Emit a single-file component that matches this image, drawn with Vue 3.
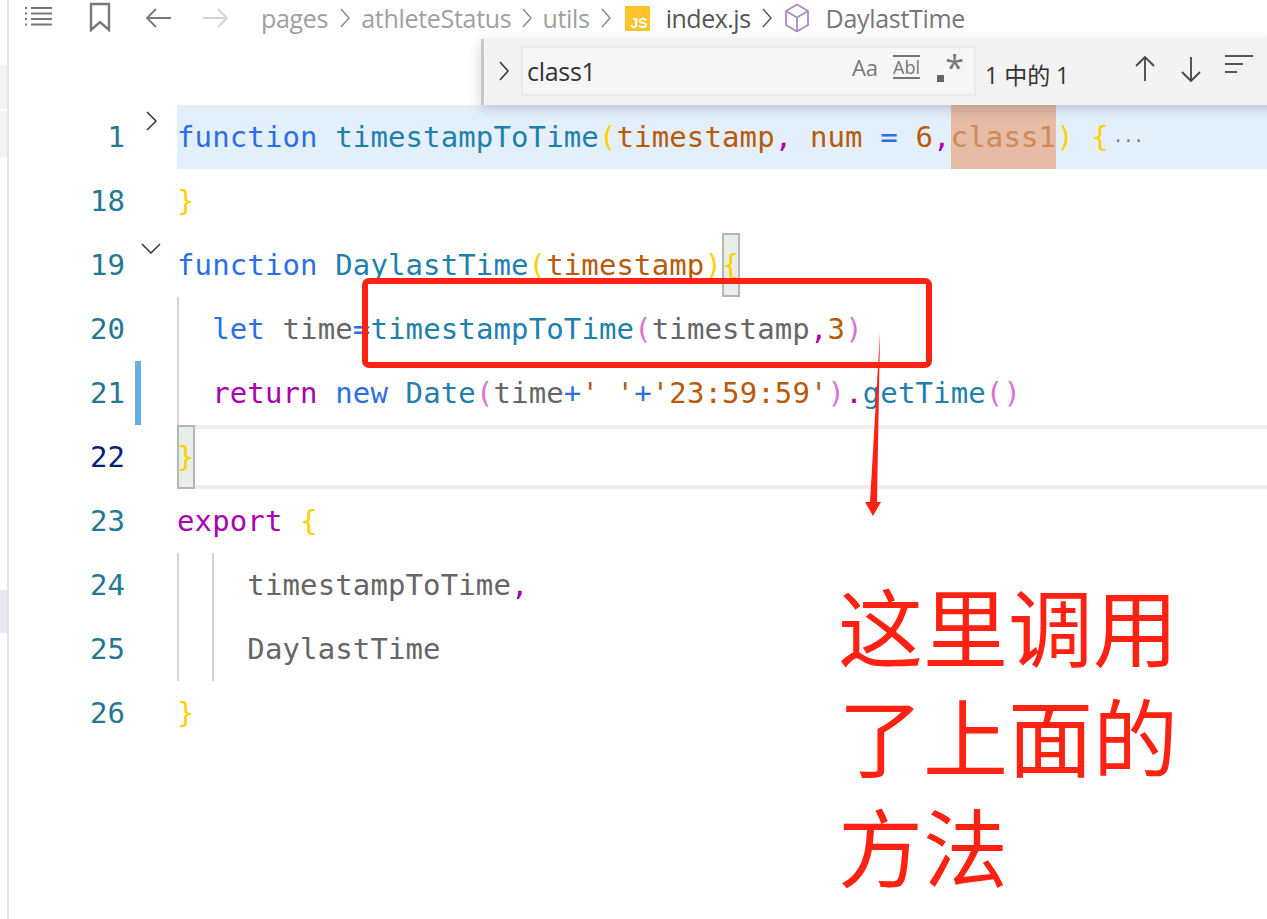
<script setup>
const lines = [
  { n: 1, fold: 'right', hl: true, toks: [['function ', 'blue'], ['timestampToTime', 'teal'], ['(', 'yel'], ['timestamp', 'org'], [',', 'pur'], [' ', 'gray'], ['num', 'org'], [' ', 'gray'], ['=', 'blue'], [' ', 'gray'], ['6', 'org'], [',', 'pur'], ['class1', 'match'], [')', 'yel'], [' ', 'gray'], ['{', 'yel']], dots: true },
  { n: 18, toks: [['}', 'yel']] },
  { n: 19, fold: 'down', toks: [['function ', 'blue'], ['DaylastTime', 'teal'], ['(', 'yel'], ['timestamp', 'org'], [')', 'yel'], ['{', 'yel box']] },
  { n: 20, guides: 1, indent: 2, toks: [['let ', 'blue'], ['time', 'gray'], ['=', 'blue'], ['timestampToTime', 'teal'], ['(', 'pink'], ['timestamp', 'gray'], [',', 'pur'], ['3', 'org'], [')', 'pink']] },
  { n: 21, guides: 1, indent: 2, mod: true, toks: [['return ', 'pur'], ['new ', 'blue'], ['Date', 'teal'], ['(', 'pink'], ['time', 'gray'], ['+', 'blue'], ["' '", 'org'], ['+', 'blue'], ["'23:59:59'", 'org'], [')', 'pink'], ['.', 'pur'], ['getTime', 'teal'], ['()', 'pink']] },
  { n: 22, current: true, toks: [['}', 'yel box']] },
  { n: 23, toks: [['export ', 'pur'], ['{', 'yel']] },
  { n: 24, guides: 2, indent: 4, toks: [['timestampToTime', 'gray'], [',', 'pur']] },
  { n: 25, guides: 2, indent: 4, toks: [['DaylastTime', 'gray']] },
  { n: 26, toks: [['}', 'yel']] }
]
</script>

<template>
  <div class="page">
    <aside class="strip">
      <div class="tab t1"></div>
      <div class="tab t2"></div>
      <div class="tab t3"></div>
    </aside>
    <main class="editor">
      <nav class="crumbs">
        <svg class="ic list" width="30" height="24" viewBox="0 0 30 24" fill="none" stroke="#777" stroke-width="2">
          <path d="M1 2h2M7 2h21M1 7.5h2M7 7.5h21M1 13h2M7 13h21M1 18.500h2M7 18.500h21" />
        </svg>
        <svg class="ic mark" width="22" height="30" viewBox="0 0 22 30" fill="none" stroke="#777" stroke-width="2.400">
          <path d="M2 2h18v26l-9-8-9 8z" />
        </svg>
        <svg class="ic back" width="28" height="22" viewBox="0 0 28 22" fill="none" stroke="#777" stroke-width="1.800">
          <path d="M26 11H2M11 2l-9 9 9 9" />
        </svg>
        <svg class="ic fwd" width="28" height="22" viewBox="0 0 28 22" fill="none" stroke="#d4d4d4" stroke-width="1.800">
          <path d="M2 11h24M17 2l9 9-9 9" />
        </svg>
        <span class="c-dim first">pages</span>
        <svg class="sep" width="12" height="22" viewBox="0 0 12 22" fill="none" stroke="#888" stroke-width="1.400"><path d="M2 2l8 9-8 9" /></svg>
        <span class="c-dim">athleteStatus</span>
        <svg class="sep tight" width="12" height="22" viewBox="0 0 12 22" fill="none" stroke="#888" stroke-width="1.400"><path d="M2 2l8 9-8 9" /></svg>
        <span class="c-dim">utils</span>
        <svg class="sep" width="12" height="22" viewBox="0 0 12 22" fill="none" stroke="#888" stroke-width="1.400"><path d="M2 2l8 9-8 9" /></svg>
        <span class="js"><span>JS</span></span>
        <span class="c-dark">index.js</span>
        <svg class="sep" width="12" height="22" viewBox="0 0 12 22" fill="none" stroke="#555" stroke-width="1.400"><path d="M2 2l8 9-8 9" /></svg>
        <svg class="cube" width="26" height="30" viewBox="0 0 26 30" fill="none" stroke="#a98ac6" stroke-width="1.800">
          <path d="M13 1.500l11 6.500v14l-11 6.500L2 22V8zM2 8l11 6.500L24 8M13 14.500v14" />
        </svg>
        <span class="c-sym">DaylastTime</span>
      </nav>

      <section class="code">
        <div v-for="l in lines" :key="l.n" class="line" :class="{ current: l.current }">
          <div class="num" :class="{ cur: l.current }">{{ l.n }}</div>
          <div class="gutter">
            <span v-if="l.mod" class="mod"></span>
            <svg v-if="l.fold === 'right'" class="fold-r" width="14" height="22" viewBox="0 0 14 22" fill="none" stroke="#333" stroke-width="1.500"><path d="M2 2l9 9-9 9" /></svg>
            <svg v-if="l.fold === 'down'" class="fold-d" width="22" height="14" viewBox="0 0 22 14" fill="none" stroke="#333" stroke-width="1.500"><path d="M2 2l9 9 9-9" /></svg>
          </div>
          <div class="text" :class="{ hl: l.hl }">
            <span v-for="g in (l.guides || 0)" :key="g" class="guide" :style="{ left: (g - 1) * 35 + 'px' }"></span>
            <span class="pad" v-if="l.indent">{{ ' '.repeat(l.indent) }}</span>
            <span v-for="(t, i) in l.toks" :key="i" :class="t[1]">{{ t[0] }}</span>
            <span v-if="l.dots" class="dots">···</span>
          </div>
        </div>
      </section>

      <div class="find">
        <svg class="find-chev" width="12" height="22" viewBox="0 0 12 22" fill="none" stroke="#333" stroke-width="1.500"><path d="M2 2l8 9-8 9" /></svg>
        <div class="find-input">
          <span class="find-q">class1</span>
          <span class="opt aa">Aa</span>
          <span class="opt ab">Abl</span>
          <span class="opt re"><i></i>*</span>
        </div>
        <span class="count">1 中的 1</span>
        <svg class="arrow" width="22" height="28" viewBox="0 0 22 28" fill="none" stroke="#444" stroke-width="1.800"><path d="M11 26V2M2 11l9-9 9 9" /></svg>
        <svg class="arrow" width="22" height="28" viewBox="0 0 22 28" fill="none" stroke="#444" stroke-width="1.800"><path d="M11 2v24M2 17l9 9 9-9" /></svg>
        <svg class="sel" width="28" height="20" viewBox="0 0 28 20" fill="none" stroke="#555" stroke-width="2"><path d="M0 2h28M0 10h18M0 18h12" /></svg>
      </div>

      <svg class="annot" width="1267" height="919" viewBox="0 0 1267 919">
        <rect x="365" y="281" width="564" height="84" rx="4" fill="none" stroke="#ff2111" stroke-width="6" />
        <path d="M880 332L877 502h4l-8 14-8-14h5z" fill="#ff2111" />
      </svg>
      <div class="note">这里调用<br />了上面的<br />方法</div>
    </main>
  </div>
</template>

<style>
html, body { margin: 0; background: #fff; }
</style>

<style scoped>
.page { display: flex; width: 1267px; height: 919px; overflow: hidden; background: #fff; position: relative; }
.strip { width: 7px; border-right: 2px solid #e6e6e6; background: #fff; flex: none; display: flex; flex-direction: column; }
.tab { background: #f3f3f3; }
.t1 { margin-top: 65px; height: 44px; }
.t2 { margin-top: 2px; height: 46px; }
.t3 { margin-top: 433px; height: 43px; background: #e8e9f3; }
.editor { flex: 1; min-width: 0; position: relative; }
.crumbs { height: 36px; display: flex; align-items: center; font: 25px "Open Sans", "Liberation Sans", sans-serif; }
.ic { flex: none; }
.list { margin-left: 15px; }
.mark { margin-left: 35px; margin-top: -3px; }
.back { margin-left: 34px; }
.fwd { margin-left: 28px; }
.c-dim { color: #a0a0a0; letter-spacing: -0.3px; }
.first { margin-left: 32px; }
.sep { margin: 0 10.500px; flex: none; }
.sep.tight { margin: 0 9.500px; }
.js { width: 25px; height: 25px; margin-left: 2px; margin-right: 16px; background: #fdc42d; color: #fff; position: relative; flex: none; }
.js span { position: absolute; right: 2px; bottom: 0; font: bold 14px/16px "Liberation Sans", sans-serif; }
.c-dark { color: #555; letter-spacing: -0.5px; }
.cube { margin-right: 16px; flex: none; }
.c-sym { color: #777; letter-spacing: -0.3px; }
.code { padding-top: 69px; }
.line { display: flex; height: 64px; position: relative; }
.line.current::after { content: ""; position: absolute; left: 168px; right: 0; top: 0; bottom: 0; border-top: 4px solid #eeeeee; border-bottom: 4px solid #eeeeee; pointer-events: none; }
.num { width: 116px; text-align: right; font: 29px/64px "DejaVu Sans Mono", monospace; color: #237893; flex: none; }
.num.cur { color: #0b216f; }
.gutter { width: 52px; flex: none; position: relative; }
.mod { position: absolute; left: 10px; top: 0; bottom: 0; width: 6px; background: #66afe0; }
.fold-r { position: absolute; left: 20px; top: 5px; }
.fold-d { position: absolute; left: 15px; top: 9px; }
.text { flex: 1; min-width: 0; position: relative; z-index: 1; white-space: pre; font: 29px/64px "DejaVu Sans Mono", monospace; letter-spacing: 0.120px; color: #666; }
.hl { background: #e3f0fc; }
.guide { position: absolute; top: 0; bottom: 0; width: 2px; background: #d3d3d3; }
.blue { color: #2c6fe0; }
.teal { color: #1f80ad; }
.org { color: #b85a08; }
.pur { color: #a900b0; }
.yel { color: #ffd000; }
.pink { color: #dd70d5; }
.gray { color: #666; }
.match { color: #cf8a58; background: #e6bca6; display: inline-block; height: 64px; }
.box { display: inline-block; height: 64px; background: #e5efe5; box-shadow: inset 0 0 0 2px #b5b5b5; }
.dots { color: #777; font-size: 17px; margin-left: 4px; }
.find { position: absolute; left: 472px; top: 39px; width: 795px; height: 66px; z-index: 2; box-sizing: border-box; background: #f3f3f3; border-left: 3px solid #c8c8c8; box-shadow: 0 4px 12px rgba(0,0,0,.18); display: flex; align-items: center; font: 25px "Open Sans", "Liberation Sans", sans-serif; color: #333; }
.find-chev { margin-left: 14px; margin-top: -2px; flex: none; }
.find-input { width: 455px; height: 50px; box-sizing: border-box; margin-left: 11px; margin-top: -2px; border: 2px solid #ebebeb; display: flex; align-items: center; background: #f6f6f6; padding-left: 4px; padding-right: 4px; }
.find-q { flex: 1; color: #333; letter-spacing: -0.3px; }
.opt { color: #777; }
.aa { margin-right: 15px; margin-top: -8px; font-size: 22px; }
.ab { margin-right: 16px; margin-top: -8px; font-size: 18px; border-top: 2px solid #777; border-bottom: 2px solid #777; line-height: 20px; }
.re { margin-right: 6px; position: relative; width: 28px; font-size: 34px; line-height: 30px; text-align: right; margin-top: -8px; }
.re i { position: absolute; left: 1px; bottom: 0; width: 7px; height: 7px; background: #666; }
.count { margin-left: 9px; margin-top: 3px; font-size: 23px; width: 149px; flex: none; font-family: "Open Sans", "Noto Sans CJK SC", sans-serif; }
.arrow { flex: none; margin-right: 24px; margin-top: -6px; }
.sel { flex: none; margin-top: -16px; margin-left: -1px; }
.annot { position: absolute; left: -9px; top: 0; z-index: 3; pointer-events: none; }
.note { position: absolute; left: 829px; top: 569px; z-index: 3; font: 400 85px/110px "Noto Sans CJK SC", sans-serif; color: #ff2111; white-space: nowrap; }
</style>
